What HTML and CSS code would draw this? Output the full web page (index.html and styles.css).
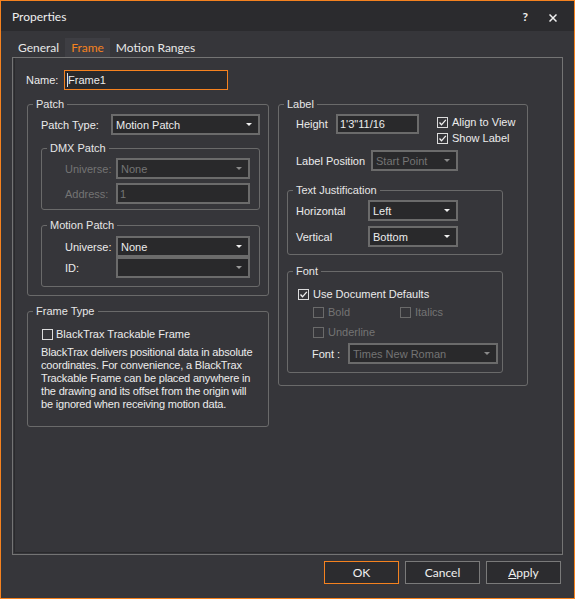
FILE: index.html
```html
<!DOCTYPE html>
<html lang="en">
<head>
    <meta charset="UTF-8">
    <title>Properties</title>
    <link rel="stylesheet" href="styles.css">
</head>
<body>
    <div class="dialog">
        <!-- Title bar -->
        <div class="titlebar">
            <span class="title">Properties</span>
            <span class="help">?</span>
            <svg class="close" width="8" height="8" viewBox="0 0 8 8">
                <path d="M0.5 0.5L7.5 7.5M7.5 0.5L0.5 7.5" stroke="#f0f0f0" stroke-width="1.5"/>
            </svg>
        </div>

        <!-- Tabs -->
        <div class="tabs">
            <span class="tab">General</span>
            <span class="tab active">Frame</span>
            <span class="tab">Motion Ranges</span>
        </div>

        <div class="panel">
            <div class="field name-field">
                <label>Name:</label>
                <div class="textbox focused"><i class="caret"></i>Frame1</div>
            </div>

            <div class="columns">
                <!-- Left column -->
                <div class="col col-left">
                    <fieldset class="group">
                        <legend>Patch</legend>
                        <div class="gbody patch-body">
                            <div class="field patch-type">
                                <label>Patch Type:</label>
                                <div class="combo"><span class="val">Motion Patch</span><i class="arrow"></i></div>
                            </div>

                            <fieldset class="group dmx">
                                <legend>DMX Patch</legend>
                                <div class="gbody dmx-body">
                                    <div class="field sub-field disabled">
                                        <label>Universe:</label>
                                        <div class="combo"><span class="val">None</span><i class="arrow"></i></div>
                                    </div>
                                    <div class="field sub-field disabled">
                                        <label>Address:</label>
                                        <div class="textbox">1</div>
                                    </div>
                                </div>
                            </fieldset>

                            <fieldset class="group motion">
                                <legend>Motion Patch</legend>
                                <div class="gbody motion-body">
                                    <div class="field sub-field">
                                        <label>Universe:</label>
                                        <div class="combo"><span class="val">None</span><i class="arrow"></i></div>
                                    </div>
                                    <div class="field sub-field">
                                        <label>ID:</label>
                                        <div class="combo empty"><span class="val"></span><span class="btn-area"><i class="arrow"></i></span></div>
                                    </div>
                                </div>
                            </fieldset>
                        </div>
                    </fieldset>

                    <fieldset class="group frame-type">
                        <legend>Frame Type</legend>
                        <div class="gbody frame-body">
                            <div class="check-row bt-row"><span class="box"></span>BlackTrax Trackable Frame</div>
                            <p class="note">BlackTrax delivers positional data in absolute<br>coordinates. For convenience, a BlackTrax<br>Trackable Frame can be placed anywhere in<br>the drawing and its offset from the origin will<br>be ignored when receiving motion data.</p>
                        </div>
                    </fieldset>
                </div>

                <!-- Right column -->
                <div class="col col-right">
                    <fieldset class="group">
                        <legend>Label</legend>
                        <div class="gbody label-body">
                            <div class="label-top">
                                <div class="field height-field">
                                    <label>Height</label>
                                    <div class="textbox">1'3"11/16</div>
                                </div>
                                <div class="checks">
                                    <div class="check-row"><span class="box on"><svg width="9" height="9" viewBox="0 0 9 9"><polyline points="1.5,4.5 3.5,6.8 7.8,1.8" fill="none" stroke="#f0f0f0" stroke-width="1.3"/></svg></span>Align to View</div>
                                    <div class="check-row"><span class="box on"><svg width="9" height="9" viewBox="0 0 9 9"><polyline points="1.5,4.5 3.5,6.8 7.8,1.8" fill="none" stroke="#f0f0f0" stroke-width="1.3"/></svg></span>Show Label</div>
                                </div>
                            </div>
                            <div class="field label-pos">
                                <label>Label Position</label>
                                <div class="combo disabled"><span class="val">Start Point</span><i class="arrow"></i></div>
                            </div>

                            <fieldset class="group justify">
                                <legend>Text Justification</legend>
                                <div class="gbody justify-body">
                                    <div class="field">
                                        <label>Horizontal</label>
                                        <div class="combo"><span class="val">Left</span><i class="arrow"></i></div>
                                    </div>
                                    <div class="field">
                                        <label>Vertical</label>
                                        <div class="combo"><span class="val">Bottom</span><i class="arrow"></i></div>
                                    </div>
                                </div>
                            </fieldset>

                            <fieldset class="group font">
                                <legend>Font</legend>
                                <div class="gbody font-body">
                                    <div class="check-row"><span class="box on"><svg width="9" height="9" viewBox="0 0 9 9"><polyline points="1.5,4.5 3.5,6.8 7.8,1.8" fill="none" stroke="#f0f0f0" stroke-width="1.3"/></svg></span>Use Document Defaults</div>
                                    <div class="style-row">
                                        <div class="check-row disabled bold-item"><span class="box"></span>Bold</div>
                                        <div class="check-row disabled"><span class="box"></span>Italics</div>
                                    </div>
                                    <div class="style-row underline-row">
                                        <div class="check-row disabled"><span class="box"></span>Underline</div>
                                    </div>
                                    <div class="field font-field">
                                        <label>Font :</label>
                                        <div class="combo disabled"><span class="val">Times New Roman</span><i class="arrow"></i></div>
                                    </div>
                                </div>
                            </fieldset>
                        </div>
                    </fieldset>
                </div>
            </div>
        </div>

        <!-- Dialog buttons -->
        <div class="buttons">
            <div class="btn default">OK</div>
            <div class="btn">Cancel</div>
            <div class="btn"><u>A</u>pply</div>
        </div>
    </div>
</body>
</html>
```

FILE: styles.css
```css
* {
    box-sizing: border-box;
}

body {
    margin: 0;
    background-color: #36363a;
    font-family: "Liberation Sans", Arial, sans-serif;
    font-size: 11px;
    color: #ececec;
}

.dialog {
    width: 575px;
    height: 599px;
    border: 1px solid #f5821f;
    background-color: #36363a;
    display: flex;
    flex-direction: column;
}

/* Title bar */
.titlebar {
    flex: none;
    height: 30px;
    background-color: #2b2b2e;
    display: flex;
    align-items: flex-start;
    padding: 8px 0 0 11px;
    font-family: Lato, "Noto Sans", sans-serif;
    font-size: 12px;
    line-height: 16px;
    color: #f0f0f0;
}

.titlebar .title {
    flex: 1;
}

.titlebar .help {
    font-weight: bold;
    margin-right: 21px;
}

.titlebar .close {
    margin: 5px 17px 0 0;
}

/* Tabs */
.tabs {
    flex: none;
    display: flex;
    height: 19px;
    margin: 7px 0 0 11px;
    font-family: Lato, "Noto Sans", sans-serif;
    font-size: 12px;
    line-height: 19px;
    color: #e8e8e8;
}

.tab {
    padding: 0 6px;
}

.tab.active {
    background-color: #3e3e43;
    color: #f5821f;
}

.panel {
    flex: none;
    height: 498px;
    margin: 0 11px;
    border: 1px solid #747474;
    box-shadow: inset 1px -1px 0 #36363a, inset 2px -2px 0 #2a2a2c;
    padding: 12px 0 0 13px;
}

/* Form pieces */
.field {
    display: flex;
    align-items: center;
}

.field label {
    flex: none;
    white-space: nowrap;
}

.textbox {
    height: 21px;
    border: 2px solid #6b6b6b;
    background-color: #29292b;
    padding: 0 2px;
    display: flex;
    align-items: center;
    white-space: nowrap;
}

.textbox.focused {
    height: 20px;
    border: 1px solid #f5821f;
    padding: 0 2px;
}

.caret {
    width: 1px;
    height: 14px;
    background-color: #e0e0e0;
}

.combo {
    height: 21px;
    border: 2px solid #6b6b6b;
    background-color: #29292b;
    padding: 0 6px 0 3px;
    display: flex;
    align-items: center;
}

.combo .val {
    flex: 1;
    white-space: nowrap;
    overflow: hidden;
}

.arrow {
    width: 0;
    height: 0;
    border-left: 3px solid transparent;
    border-right: 3px solid transparent;
    border-top: 3px solid #f0f0f0;
}

.combo.empty {
    padding-right: 0;
}

.combo.empty .btn-area {
    width: 18px;
    height: 100%;
    background-color: #262628;
    display: flex;
    align-items: center;
    justify-content: center;
}

.combo.empty .arrow {
    border-top-color: #9a9a9a;
}

.disabled,
.combo.disabled,
.disabled .textbox,
.disabled .combo {
    color: #747474;
}

.disabled .arrow,
.combo.disabled .arrow {
    border-top-color: #8a8a8a;
}

.check-row {
    display: flex;
    align-items: center;
    height: 16px;
    gap: 4px;
    white-space: nowrap;
}

.box {
    flex: none;
    width: 11px;
    height: 11px;
    border: 1px solid #dcdcdc;
    display: flex;
    align-items: center;
    justify-content: center;
}

.check-row.disabled .box {
    border-color: #6a6a6a;
}

/* Group boxes */
fieldset.group {
    margin: 0;
    padding: 0;
    min-width: 0;
    border: 1px solid #6a6a6a;
    border-radius: 3px;
}

fieldset.group legend {
    margin-left: 5px;
    padding: 0 3px;
    line-height: 14px;
    color: #e6e6e6;
}

.name-field label {
    width: 38px;
}

.name-field .textbox {
    width: 164px;
}

.columns {
    display: flex;
    align-items: flex-start;
    gap: 9px;
    margin: 7px 0 0 1px;
}

.col-left {
    width: 242px;
    flex: none;
}

.col-right {
    width: 250px;
    flex: none;
}

/* Patch */
.patch-body {
    padding: 3px 8px 8px 13px;
}

.patch-type label {
    width: 70px;
}

.patch-type .combo {
    width: 149px;
}

.dmx {
    margin-top: 6px !important;
}

.motion {
    margin-top: 8px !important;
}

.dmx-body {
    padding: 3px 8px 5px 23px;
    display: flex;
    flex-direction: column;
    gap: 4px;
}

.motion-body {
    padding: 4px 8px 8px 23px;
}

.sub-field label {
    width: 51px;
}

.sub-field .combo,
.sub-field .textbox {
    width: 134px;
}

/* Frame type */
.frame-type {
    margin-top: 8px !important;
}

.frame-body {
    padding: 9px 8px 15px 13px;
}

.bt-row {
    height: 14px;
    gap: 3px;
    margin-left: 1px;
}

.note {
    margin: 5px 0 0;
    line-height: 13px;
    letter-spacing: -0.18px;
    white-space: nowrap;
}

/* Label */
.label-body {
    padding: 3px 24px 12px 8px;
}

.label-top {
    display: flex;
    align-items: flex-start;
}

.height-field {
    margin-left: 9px;
}

.height-field label {
    width: 40px;
}

.height-field .textbox {
    width: 83px;
    height: 20px;
}

.checks {
    margin-left: 18px;
}

.label-pos {
    margin: 4px 0 0 9px;
}

.label-pos label {
    width: 75px;
}

.label-pos .combo {
    width: 87px;
}

.justify {
    margin-top: 12px !important;
}

.justify-body {
    padding: 3px 8px 7px 8px;
    display: flex;
    flex-direction: column;
    gap: 5px;
}

.justify-body label {
    width: 72px;
}

.justify-body .combo {
    width: 90px;
}

.font {
    margin-top: 9px !important;
}

.font-body {
    padding: 8px 4px 8px 10px;
}

.style-row {
    display: flex;
    margin-top: 2px;
    padding-left: 15px;
}

.style-row.underline-row {
    margin-top: 4px;
}

.bold-item {
    width: 87px;
}

.font-field {
    margin: 3px 0 0 14px;
}

.font-field label {
    width: 36px;
}

.font-field .combo {
    width: 150px;
}

/* Buttons */
.buttons {
    flex: none;
    display: flex;
    justify-content: flex-end;
    gap: 6px;
    margin-top: 6px;
    padding-right: 13px;
}

.btn {
    width: 75px;
    height: 23px;
    border: 1px solid #7a7a7a;
    background-color: #2c2c2f;
    font-family: Lato, "Noto Sans", sans-serif;
    font-size: 12px;
    line-height: 21px;
    text-align: center;
    color: #f0f0f0;
}

.btn.default {
    border-color: #f5821f;
}
```
